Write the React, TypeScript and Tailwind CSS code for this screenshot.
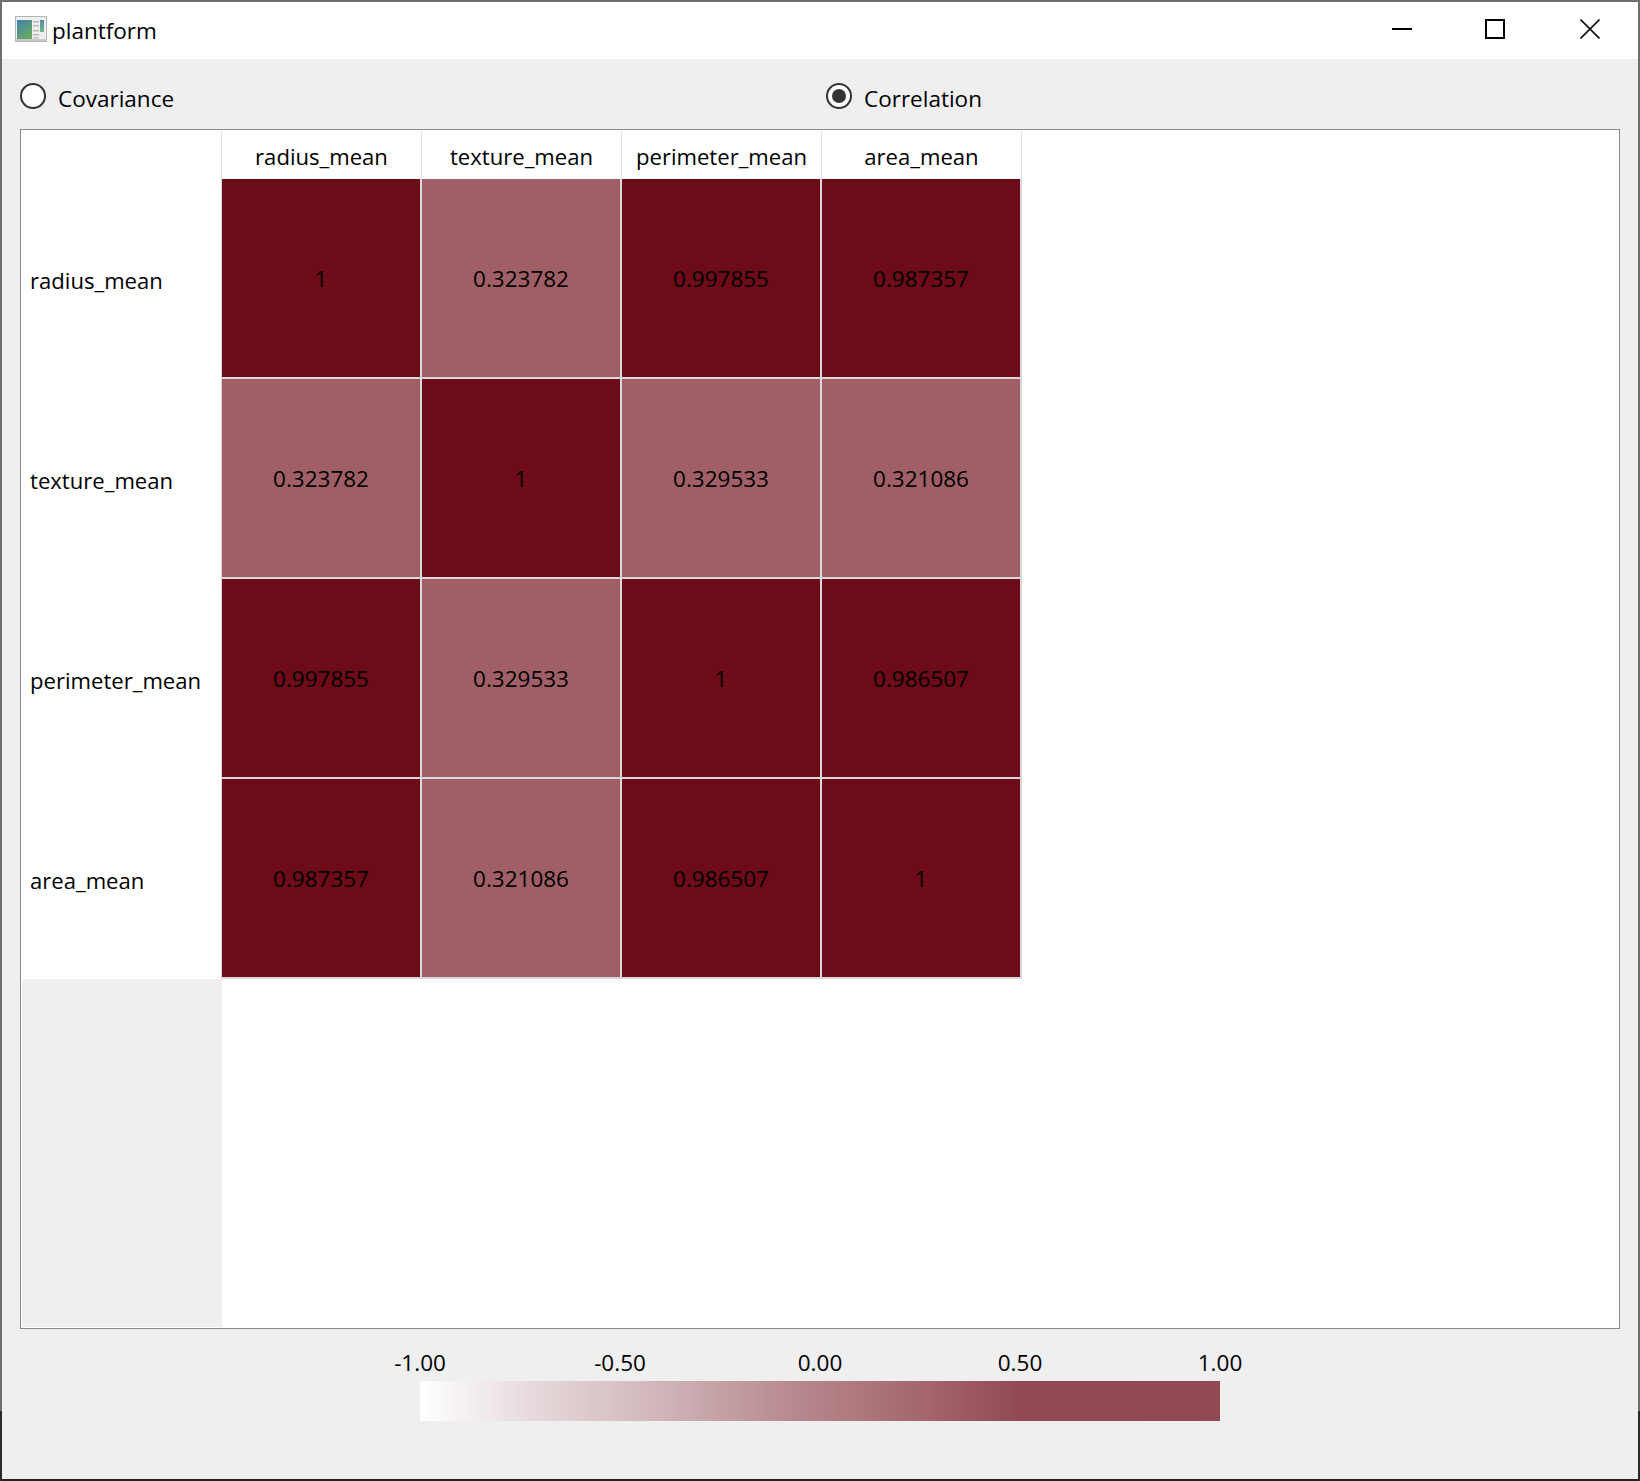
const FONT = "font-['Open_Sans','Noto_Sans',sans-serif]";
const labels = ["radius_mean", "texture_mean", "perimeter_mean", "area_mean"];
const values = [
  ["1", "0.323782", "0.997855", "0.987357"],
  ["0.323782", "1", "0.329533", "0.321086"],
  ["0.997855", "0.329533", "1", "0.986507"],
  ["0.987357", "0.321086", "0.986507", "1"],
];

function AppIcon() {
  return (
    <svg width="32" height="26" viewBox="0 0 32 26" className="mb-[3px] shrink-0">
      <defs>
        <linearGradient id="g" x1="0" y1="0" x2="0.6" y2="1">
          <stop offset="0" stopColor="#3f7fb0" />
          <stop offset="1" stopColor="#68ab62" />
        </linearGradient>
        <linearGradient id="s" x1="0" y1="0" x2="0" y2="1">
          <stop offset="0" stopColor="#4d8db0" />
          <stop offset="1" stopColor="#74b47c" />
        </linearGradient>
      </defs>
      <rect x="0.5" y="0.5" width="31" height="25" fill="#eef0f0" stroke="#b4b4b4" />
      <rect x="1" y="23" width="30" height="2" fill="#c9c9c9" />
      <rect x="2" y="4" width="15" height="19" fill="url(#g)" />
      <rect x="18" y="5" width="6" height="1.5" fill="#b8b8b8" />
      <rect x="18" y="9" width="6" height="1.5" fill="#b8b8b8" />
      <rect x="18" y="14" width="6" height="1.5" fill="#b8b8b8" />
      <rect x="18" y="18" width="6" height="1.5" fill="#b8b8b8" />
      <rect x="18" y="21" width="6" height="1.5" fill="#c4c4c4" />
      <rect x="25" y="4" width="4" height="12" fill="url(#s)" />
    </svg>
  );
}

function Radio({ checked, label }: { checked?: boolean; label: string }) {
  return (
    <div className="flex items-center gap-[12px]">
      <span className="flex h-[26px] w-[26px] items-center justify-center rounded-full border-2 border-[#333333] bg-white">
        {checked && <span className="h-[14px] w-[14px] rounded-full bg-[#333333]" />}
      </span>
      <span className="pt-[6px] text-[22.5px] leading-[30px] text-black">{label}</span>
    </div>
  );
}

export default function App() {
  return (
    <div className={`${FONT} relative box-border flex h-[1481px] w-[1640px] flex-col border-x-2 border-t-2 border-b-2 border-x-[#6f6f6f] border-t-[#6f6f6f] border-b-[#222222] bg-[#efefef] text-black`}>
      <span className="absolute -left-[2px] top-[1409px] h-[70px] w-[2px] bg-[#2b2b2b]" />
      <span className="absolute -right-[2px] top-[1409px] h-[70px] w-[2px] bg-[#2b2b2b]" />
      <div className="flex h-[57px] items-center bg-white pl-[13px]">
        <AppIcon />
        <span className="ml-[5px] text-[22.5px] text-black">plantform</span>
        <div className="mb-[3px] ml-auto flex items-center">
          <svg width="20" height="20" viewBox="0 0 20 20" className="mr-[73px]"><path d="M0 10h20" stroke="#000" strokeWidth="2" /></svg>
          <svg width="20" height="20" viewBox="0 0 20 20" className="mr-[75px]"><rect x="1" y="1" width="18" height="18" fill="none" stroke="#000" strokeWidth="2" /></svg>
          <svg width="20" height="20" viewBox="0 0 20 20" className="mr-[38px]"><path d="M0.5 0.5L19.5 19.5M19.5 0.5L0.5 19.5" stroke="#111" strokeWidth="1.6" /></svg>
        </div>
      </div>
      <div className="flex h-[70px] items-center pl-[18px] pt-[3px]">
        <div className="w-[806px]"><Radio label="Covariance" /></div>
        <Radio checked label="Correlation" />
      </div>
      <div className="mx-[18px] flex h-[1200px] flex-col border border-[#868a8e] bg-white">
        <div className="ml-px mt-px flex h-[48px]">
          <div className="w-[199px]" />
          {labels.map((l) => (
            <div key={l} className="flex w-[200px] items-center justify-center border-l border-[#e0e0e0] pt-[3px] text-[22.1px]">{l}</div>
          ))}
          <div className="border-l border-[#e0e0e0]" />
        </div>
        {labels.map((l, r) => (
          <div key={l} className="ml-px flex h-[200px]">
            <div className="flex w-[199px] items-center pl-[8px] pt-[4px] text-[22.1px]">{l}</div>
            <div className="flex border-l border-[#d9d9d9]">
              {values[r].map((v, c) => (
                <div
                  key={c}
                  className={`box-content flex h-[198px] w-[198px] items-center justify-center border-r-2 border-b-2 border-[#d9d9d9] text-[22.5px] ${parseFloat(v) > 0.5 ? "bg-[#6d0c18]" : "bg-[#a05f66]"}`}
                >
                  <span className="pt-[2px]">{v}</span>
                </div>
              ))}
            </div>
          </div>
        ))}
        <div className="mb-px ml-px w-[200px] flex-1 bg-[#efefef]" />
      </div>
      <div className="flex flex-col items-start pl-[418px]">
        <div className="relative mt-[19px] h-[33px] w-[800px] text-[22.5px]">
          {["-1.00", "-0.50", "0.00", "0.50", "1.00"].map((t, i) => (
            <span key={t} className={`absolute top-0 w-[100px] -translate-x-1/2 text-center leading-[30px] ${["left-0","left-[200px]","left-[400px]","left-[600px]","left-[800px]"][i]}`}>{t}</span>
          ))}
        </div>
        <div className="h-[40px] w-[800px] bg-[linear-gradient(to_right,#ffffff_0%,#e8dcde_13%,#cdb0b4_32%,#b98d92_45%,#a3636b_64%,#914a53_74.6%,#924a54_100%)]" />
      </div>
    </div>
  );
}
